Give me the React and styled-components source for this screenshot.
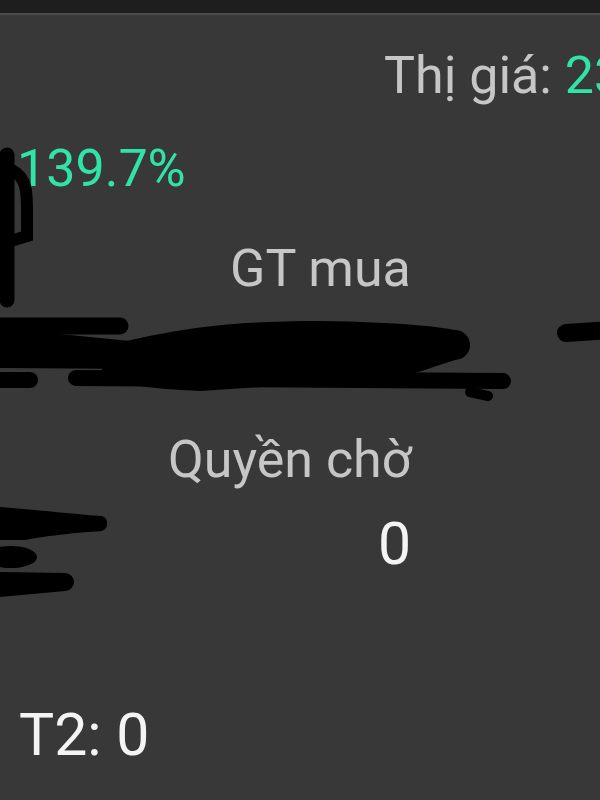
import React from 'react';
import styled, { createGlobalStyle } from 'styled-components';

const GlobalStyle = createGlobalStyle`
  html, body {
    margin: 0;
    padding: 0;
    background: #383838;
  }
  body {
    font-family: Roboto, "Liberation Sans", sans-serif;
  }
`;

const App = () => {
  return (
    <Screen>
      <GlobalStyle />
      <TopBar />
      <Content>
        <Row $top={31} $left={384}>
          <Label>Thị giá: </Label>
          <Green>23.450</Green>
        </Row>
        <Row $top={33} $left={17}>
          <Green>139.7%</Green>
        </Row>
        <Row $top={40} $left={230}>
          <Label>GT mua</Label>
        </Row>
        <Row $top={131} $left={168}>
          <Label>Quyền chờ</Label>
        </Row>
        <Row $top={20} $left={378} $big>
          <Value>0</Value>
        </Row>
        <Row $top={123} $left={19} $big>
          <Value>T2: 0</Value>
        </Row>
      </Content>
      <Scribble viewBox="0 0 600 800" width="600" height="800">
        <g stroke="#000" strokeLinecap="round" fill="none">
          <path d="M7 155 L7 300" strokeWidth="15" />
          <path d="M12 170 C28 178 27 195 27 215 L27 236 L14 240" strokeWidth="12" />
          <path d="M-5 326 L120 326" strokeWidth="17" />
          <path d="M-5 380 L30 380" strokeWidth="16" />
          <path d="M76 378 L503 381" strokeWidth="16" />
          <path d="M470 392 L488 396" strokeWidth="10" />
          <path d="M566 333 L610 330" strokeWidth="18" />
        </g>
        <g fill="#000">
          <path d="M0 328 L140 342 L140 369 L0 368 Z" />
          <path d="M110 345 C180 328 230 321 320 321 C400 322 440 327 455 330 A15 15 0 0 1 455 360 C430 368 410 375 400 378 L200 391 C160 389 120 386 100 376 Z" />
          <path d="M0 507 C40 510 80 515 102 516 A8 8 0 0 1 102 531 C70 533 40 537 25 540 L0 540 Z" />
          <ellipse cx="11" cy="557" rx="26" ry="11" />
          <path d="M0 572 L65 573 A9 9 0 0 1 65 591 L0 597 Z" />
        </g>
      </Scribble>
    </Screen>
  );
};

export default App;

const Screen = styled.div`
  position: relative;
  width: 600px;
  height: 800px;
  overflow: hidden;
  background: #383838;
`;

const TopBar = styled.div`
  height: 13px;
  background: #1e1e1e;
  border-bottom: 2px solid #4b4b4b;
`;

const Content = styled.div`
  display: flex;
  flex-direction: column;
`;

const Row = styled.div`
  margin-top: ${p => p.$top}px;
  padding-left: ${p => p.$left}px;
  height: ${p => (p.$big ? 68 : 60)}px;
  line-height: ${p => (p.$big ? 68 : 60)}px;
  font-size: ${p => (p.$big ? 59 : 52)}px;
  white-space: nowrap;
  overflow: hidden;
`;

const Label = styled.span`
  color: #c6c6c6;
  white-space: pre;
`;

const Green = styled.span`
  color: #30e3a9;
`;

const Value = styled.span`
  color: #f4f4f4;
`;

const Scribble = styled.svg`
  position: absolute;
  top: 0;
  left: 0;
  pointer-events: none;
`;
